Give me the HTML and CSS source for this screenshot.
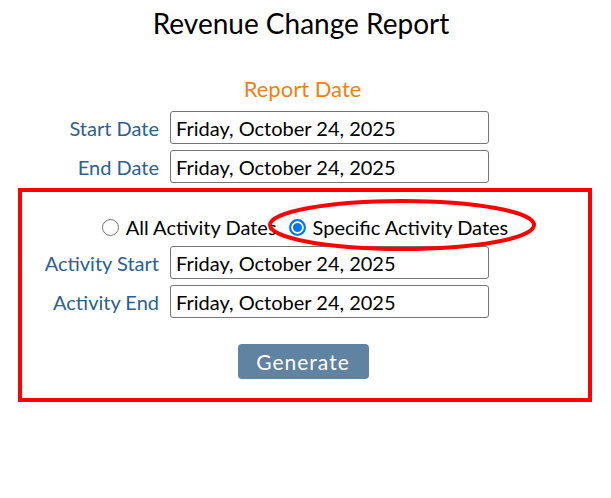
FILE: index.html
```html
<!DOCTYPE html>
<html lang="en">
<head>
    <meta charset="UTF-8">
    <meta name="viewport" content="width=device-width, initial-scale=1.0">
    <title>Revenue Change Report</title>
    <link rel="stylesheet" href="styles.css">
</head>
<body>

<h1 class="page-title">Revenue Change Report</h1>

<form class="report-form">
    <h2 class="section-title">Report Date</h2>

    <div class="form-row">
        <label for="start_date">Start Date</label>
        <input type="text" id="start_date" value="Friday, October 24, 2025">
    </div>
    <div class="form-row">
        <label for="end_date">End Date</label>
        <input type="text" id="end_date" value="Friday, October 24, 2025">
    </div>

    <!-- Activity date options -->
    <div class="activity-box">
        <div class="radio-row">
            <label class="radio-option">
                <input type="radio" name="activity" value="all">
                All Activity Dates
            </label>
            <label class="radio-option">
                <input type="radio" name="activity" value="specific" checked>
                Specific Activity Dates
            </label>
        </div>

        <div class="form-row form-row-inner">
            <label for="activity_start">Activity Start</label>
            <input type="text" id="activity_start" value="Friday, October 24, 2025">
        </div>
        <div class="form-row form-row-inner">
            <label for="activity_end">Activity End</label>
            <input type="text" id="activity_end" value="Friday, October 24, 2025">
        </div>

        <button type="button" class="btn-generate">Generate</button>

        <svg class="highlight" width="272" height="60" viewBox="0 0 272 60">
            <ellipse cx="136" cy="29" rx="132" ry="24" fill="none" stroke="#ff0000" stroke-width="4"/>
        </svg>
    </div>
</form>

</body>
</html>
```

FILE: styles.css
```css
* {
    box-sizing: border-box;
}

body {
    margin: 0;
    font-family: Lato, "Open Sans", sans-serif;
    color: #000;
    background-color: #fff;
}

.page-title {
    margin: 6px 0 0;
    padding-right: 9px;
    text-align: center;
    font-size: 28px;
    line-height: 34px;
    font-weight: 400;
}

.section-title {
    margin: 36px 0 9px;
    padding-right: 6px;
    text-align: center;
    font-size: 22px;
    line-height: 26px;
    font-weight: 400;
    color: #e8821e;
}

.form-row {
    display: flex;
    align-items: center;
}

.form-row + .form-row {
    margin-top: 6px;
}

.form-row label {
    width: 159px;
    margin-right: 11px;
    text-align: right;
    font-size: 20px;
    line-height: 24px;
    color: #2c6190;
}

.form-row input {
    width: 319px;
    height: 33px;
    padding: 0 5px;
    border: 1px solid #767676;
    border-radius: 3px;
    font-family: inherit;
    font-size: 20px;
    color: #000;
}

.form-row-inner label {
    width: 137px;
}

.activity-box {
    position: relative;
    width: 574px;
    margin: 5px 0 0 18px;
    padding: 23px 0 19px;
    border: 4px solid #ff0000;
}

.radio-row {
    display: flex;
    justify-content: center;
    align-items: center;
    margin-bottom: 7px;
    font-size: 20px;
    line-height: 24px;
}

.radio-option {
    display: flex;
    align-items: center;
    margin-right: 12px;
}

.radio-option:last-child {
    margin-right: 0;
}

.radio-option input {
    appearance: none;
    width: 17px;
    height: 17px;
    margin: 0 7px 0 0;
    border: 1px solid #767676;
    border-radius: 50%;
    background-color: #fff;
}

.radio-option input:checked {
    border: 2px solid #0075ff;
    background-color: #0075ff;
    box-shadow: inset 0 0 0 2px #fff;
}

.btn-generate {
    display: block;
    width: 131px;
    height: 35px;
    margin: 26px auto 0;
    position: relative;
    left: -2px;
    border: none;
    border-radius: 4px;
    background-color: #5f83a1;
    color: #fff;
    font-family: inherit;
    font-size: 21px;
    letter-spacing: 1px;
}

.highlight {
    position: absolute;
    left: 244px;
    top: 4px;
    pointer-events: none;
}
```
